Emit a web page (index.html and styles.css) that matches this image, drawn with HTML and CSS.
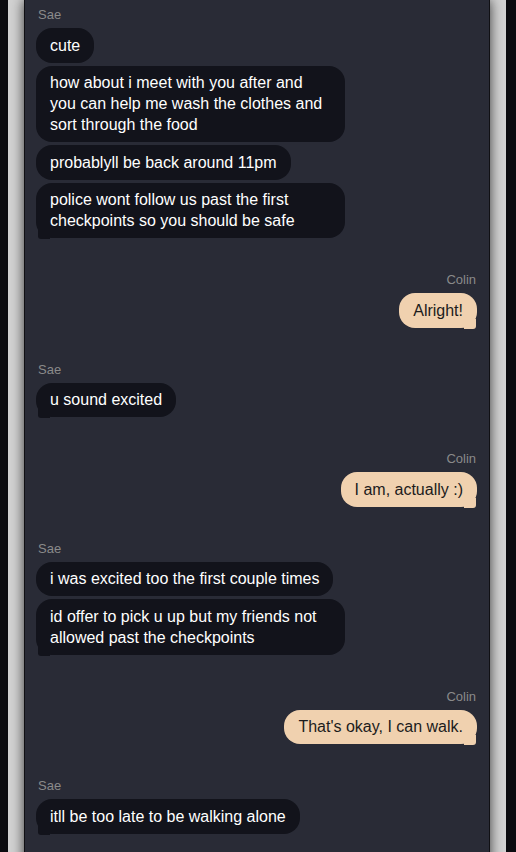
FILE: index.html
```html
<!DOCTYPE html>
<html lang="en">
  <head>
    <meta charset="UTF-8" />
    <meta name="viewport" content="width=device-width, initial-scale=1.0" />
    <title>Messages</title>
    <link rel="stylesheet" href="styles.css">
  </head>
  <body>
    <div class="frame">
      <!-- Chat log -->
      <main class="chat">
        <div class="group in">
          <div class="name">Sae</div>
          <div class="bubble">cute</div>
          <div class="bubble">how about i meet with you after and you can help me wash the clothes and sort through the food</div>
          <div class="bubble">probablyll be back around 11pm</div>
          <div class="bubble">police wont follow us past the first checkpoints so you should be safe</div>
        </div>

        <div class="group out">
          <div class="name">Colin</div>
          <div class="bubble">Alright!</div>
        </div>

        <div class="group in">
          <div class="name">Sae</div>
          <div class="bubble">u sound excited</div>
        </div>

        <div class="group out">
          <div class="name">Colin</div>
          <div class="bubble">I am, actually :)</div>
        </div>

        <div class="group in">
          <div class="name">Sae</div>
          <div class="bubble">i was excited too the first couple times</div>
          <div class="bubble">id offer to pick u up but my friends not allowed past the checkpoints</div>
        </div>

        <div class="group out">
          <div class="name">Colin</div>
          <div class="bubble">That's okay, I can walk.</div>
        </div>

        <div class="group in">
          <div class="name">Sae</div>
          <div class="bubble">itll be too late to be walking alone</div>
        </div>
      </main>
    </div>
  </body>
</html>
```

FILE: styles.css
```css
body {
  margin: 0;
  font-family: "Liberation Sans", Arial, sans-serif;
  background-color: #0b0b0f;
}

.frame {
  width: 498px;
  margin-left: 8px;
  padding: 0 16px;
  box-sizing: border-box;
  background-color: #d2d2d2;
  min-height: 100vh;
}

.chat {
  background-color: #292b36;
  border-left: 1px solid #101014;
  border-right: 1px solid #101014;
  box-shadow: 0 0 12px rgba(0, 0, 0, 0.75);
  min-height: 100vh;
  padding: 8px 12px 40px 11px;
}

.group {
  display: flex;
  flex-direction: column;
  gap: 3px;
  margin-bottom: 35px;
}

.group.in {
  align-items: flex-start;
}

.group.out {
  align-items: flex-end;
}

.name {
  font-size: 13px;
  line-height: 14px;
  color: #8a8a8a;
  margin: 0 1px 3px 2px;
}

.bubble {
  position: relative;
  max-width: 281px;
  padding: 6.75px 14px;
  border-radius: 16px;
  font-size: 16px;
  line-height: 21px;
}

.in .bubble {
  background-color: #12131b;
  color: #ffffff;
}

.out .bubble {
  background-color: #f0d1af;
  color: #1c1c1c;
}

/* little tail on the last bubble of each group */
.bubble:last-child::after {
  content: "";
  position: absolute;
  bottom: -1px;
  width: 12px;
  height: 10px;
  background-color: inherit;
}

.in .bubble:last-child::after {
  left: 2px;
  border-radius: 0 0 0 3px;
}

.out .bubble:last-child::after {
  right: 1px;
  border-radius: 0 0 3px 0;
}
```
